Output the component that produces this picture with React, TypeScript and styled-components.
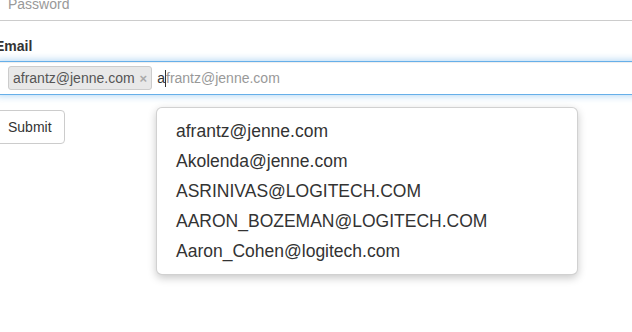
import styled, { createGlobalStyle } from "styled-components";

const suggestions = [
  "afrantz@jenne.com",
  "Akolenda@jenne.com",
  "ASRINIVAS@LOGITECH.COM",
  "AARON_BOZEMAN@LOGITECH.COM",
  "Aaron_Cohen@logitech.com",
];

export default function App() {
  return (
    <>
      <GlobalStyle />
      <Form>
        <FormGroup>
          <TextInput>
            <Placeholder>Password</Placeholder>
          </TextInput>
        </FormGroup>

        <FormGroup>
          <Label>Email</Label>
          <TagInput>
            <Tag>
              afrantz@jenne.com
              <TagRemove>×</TagRemove>
            </Tag>
            <Typed>
              a<Caret />
              <Hint>frantz@jenne.com</Hint>
            </Typed>
            <Menu>
              {suggestions.map((s) => (
                <MenuItem key={s}>{s}</MenuItem>
              ))}
            </Menu>
          </TagInput>
        </FormGroup>

        <Button>Submit</Button>
      </Form>
    </>
  );
}

const GlobalStyle = createGlobalStyle`
  html {
    overflow: hidden;
  }
  html, body {
    margin: 0;
    padding: 0;
    background: #fff;
  }
  body {
    min-height: 100vh;
    font-family: "Liberation Sans", Arial, sans-serif;
    font-size: 14px;
    color: #333;
  }
`;

const Form = styled.div`
  width: 660px;
  margin: -13px 0 0 -5px;
`;

const FormGroup = styled.div`
  margin-bottom: 15px;
`;

const TextInput = styled.div`
  box-sizing: border-box;
  height: 34px;
  padding: 0 12px;
  display: flex;
  align-items: center;
  border: 1px solid #ccc;
  border-radius: 4px;
  background: #fff;
`;

const Placeholder = styled.span`
  color: #999;
  font-size: 14px;
`;

const Label = styled.label`
  display: block;
  font-weight: 700;
  font-size: 14px;
  line-height: 20px;
  margin-bottom: 5px;
  color: #333;
`;

const TagInput = styled.div`
  position: relative;
  box-sizing: border-box;
  height: 34px;
  padding: 0 12px;
  display: flex;
  align-items: center;
  gap: 5px;
  border: 1px solid #66afe9;
  border-radius: 4px;
  background: #fff;
  box-shadow: inset 0 1px 1px rgba(0, 0, 0, 0.075),
    0 0 8px rgba(102, 175, 233, 0.6);
`;

const Tag = styled.span`
  box-sizing: border-box;
  height: 24px;
  display: inline-flex;
  align-items: center;
  padding: 0 4px 0 4px;
  border: 1px solid #ccc;
  border-radius: 3px;
  background: #e8e8e8;
  color: #555;
  font-size: 14px;
`;

const TagRemove = styled.span`
  margin-left: 5px;
  color: #aaa;
  font-weight: 700;
  font-size: 13px;
`;

const Typed = styled.span`
  display: inline-flex;
  align-items: center;
  color: #333;
  font-size: 14px;
`;

const Caret = styled.span`
  display: inline-block;
  width: 1px;
  height: 17px;
  background: #333;
`;

const Hint = styled.span`
  color: #999;
`;

const Menu = styled.ul`
  position: absolute;
  top: 45px;
  left: 160px;
  width: 422px;
  box-sizing: border-box;
  margin: 0;
  padding: 8px 0;
  list-style: none;
  background: #fff;
  border: 1px solid rgba(0, 0, 0, 0.18);
  border-radius: 6px;
  box-shadow: 0 3px 8px rgba(0, 0, 0, 0.22);
  z-index: 2;
`;

const MenuItem = styled.li`
  height: 30px;
  line-height: 30px;
  padding: 0 19px;
  font-size: 17.5px;
  color: #333;
  white-space: nowrap;
`;

const Button = styled.button`
  box-sizing: border-box;
  height: 34px;
  padding: 0 12px;
  border: 1px solid #ccc;
  border-radius: 4px;
  background: #fff;
  color: #333;
  font-family: "Liberation Sans", Arial, sans-serif;
  font-size: 14px;
`;
